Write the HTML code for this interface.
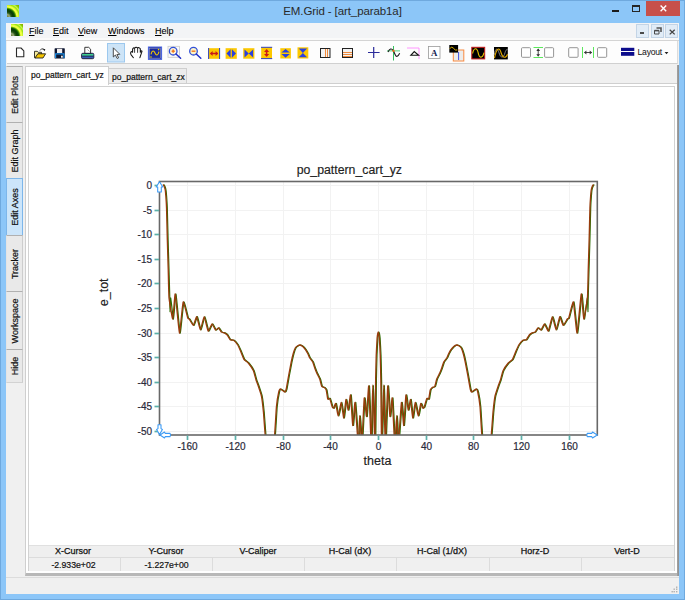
<!DOCTYPE html>
<html><head><meta charset="utf-8">
<style>
*{margin:0;padding:0;box-sizing:border-box}
html,body{width:685px;height:600px;overflow:hidden}
body{position:relative;background:#8cc6f8;font-family:"Liberation Sans",sans-serif;color:#000}
.a{position:absolute}
svg.a{overflow:visible}
#frame{left:0;top:0;width:685px;height:600px;border:1px solid #6fa9de}
#title{left:0;top:5px;width:685px;text-align:center;font-size:11.5px;color:#2a2a2a;letter-spacing:-0.1px}
#client{left:6px;top:23px;width:673px;height:571px;background:#f0f0f0}
#menubar{left:6px;top:23px;width:673px;height:18px;background:#f3f4f6;border-bottom:1px solid #d4d4d4;box-shadow:inset 0 -2px 0 #fafafa}
.menu{top:26px;font-size:9px;color:#000;-webkit-text-stroke:0.1px #000}
.menu u{text-decoration:underline}
#toolbar{left:7px;top:41px;width:671px;height:23px;background:#fdfdfd;border-top:none;border-bottom:1px solid #d0d0d0;border-right:1px solid #dcdcdc}
.vtab{left:6px;width:17px;background:#e9e9e9;border:1px solid #d2d2d2;border-left-color:#e4e4e4;border-right-color:#cdcdcd;border-top-color:#b0b0b0}
.vtab span{position:absolute;left:50%;top:50%;transform:translate(-50%,-50%) rotate(-90deg);font-size:9px;white-space:nowrap;color:#111;-webkit-text-stroke:0.2px #111}
#tabpage{left:25px;top:83px;width:654px;height:493px;background:#fff;border:1px solid #cfcfcf;border-bottom:3px solid #b8b8b8;border-right:2px solid #9c9c9c}
#content{left:28px;top:86px;width:647px;height:485px;background:#fff;border:1px solid #d2d2d2;border-bottom:none}
.tab{font-size:8.5px;color:#111;white-space:nowrap;-webkit-text-stroke:0.2px #111}
#stathdr{left:29px;top:545px;width:645px;height:12px;background:#efefef;border-top:1px solid #e0e0e0}
#statrow{left:29px;top:557px;width:645px;height:14px;background:#f0f0f0;border-top:1px solid #dcdcdc}
.sh{top:546px;font-size:9px;text-align:center;width:92px;color:#111;-webkit-text-stroke:0.25px #111}
.sd{top:560px;font-size:8.7px;text-align:center;width:92px;color:#111;-webkit-text-stroke:0.2px #111;padding-left:1px}
.vd{top:558px;width:1px;height:13px;background:#dcdcdc}
#strip{left:6px;top:577px;width:673px;height:17px;background:#f0f0f0;border-top:1px solid #dcdcdc}
</style></head><body>
<div class="a" id="frame"></div>
<!-- title icon -->
<div class="a" style="left:7px;top:5px;width:12px;height:12px;background:radial-gradient(circle 17px at 0 12px,#6a7a30 0px,#98a878 2.5px,#2a5a18 4.2px,#083c04 6px,#0e5004 7.6px,#50a000 8.6px,#f4ff48 9.8px,#e8ff40 11px,#98e010 12.5px,#c8f850 13.6px,#88c800 15px,#86a400 17px)"></div>
<div class="a" id="title">EM.Grid - [art_parab1a]</div>
<div class="a" style="left:612px;top:10px;width:6.5px;height:1.6px;background:#1a1a1a"></div>
<div class="a" style="left:632px;top:5px;width:8px;height:6.5px;border:1px solid #262626;border-top-width:2px"></div>
<div class="a" style="left:646px;top:1px;width:34px;height:15px;background:#c7504b"></div>
<svg class="a" style="left:660px;top:5px" width="7" height="7"><path d="M0.6,0.6 L6.2,6.2 M6.2,0.6 L0.6,6.2" stroke="#fff" stroke-width="1.4"/></svg>
<div class="a" id="client"></div>
<div class="a" id="menubar"></div>
<div class="a" style="left:11px;top:24px;width:12px;height:12px;background:radial-gradient(circle 17px at 0 12px,#6a7a30 0px,#98a878 2.5px,#2a5a18 4.2px,#083c04 6px,#0e5004 7.6px,#50a000 8.6px,#f4ff48 9.8px,#e8ff40 11px,#98e010 12.5px,#c8f850 13.6px,#88c800 15px,#86a400 17px)"></div>
<div class="a menu" style="left:29px"><u>F</u>ile</div>
<div class="a menu" style="left:53px"><u>E</u>dit</div>
<div class="a menu" style="left:78px"><u>V</u>iew</div>
<div class="a menu" style="left:108px"><u>W</u>indows</div>
<div class="a menu" style="left:155px"><u>H</u>elp</div>
<!-- mdi buttons -->
<div class="a" style="left:636px;top:24px;width:13px;height:14px;background:#e1ecf7;border:1px solid #c3d4e6"></div>
<div class="a" style="left:650.5px;top:24px;width:13px;height:14px;background:#e1ecf7;border:1px solid #c3d4e6"></div>
<div class="a" style="left:665px;top:24px;width:13px;height:14px;background:#e1ecf7;border:1px solid #c3d4e6"></div>
<div class="a" style="left:639.5px;top:32.3px;width:4.8px;height:1.8px;background:#4a4a4a"></div>
<svg class="a" style="left:653px;top:26px" width="10" height="10"><path d="M3.5,2 h4.5 v4" fill="none" stroke="#555" stroke-width="1.6"/><path d="M1.5,4.5 h4.5 v3.5 h-4.5 z" fill="#e1ecf7" stroke="#4a4a4a" stroke-width="1"/><path d="M1.5,4.6 h4.5" stroke="#4a4a4a" stroke-width="1.6"/></svg>
<svg class="a" style="left:668.5px;top:28.5px" width="7" height="7"><path d="M0.7,0.7 L5.7,5.4 M5.7,0.7 L0.7,5.4" stroke="#444" stroke-width="1.3"/></svg>
<div class="a" id="toolbar"></div>
<!--ICONS--><svg class="a" style="left:0;top:0" width="685" height="70" viewBox="0 0 685 70">
<!-- new doc -->
<path d="M16.5,48 H21 L23.8,50.8 V56.7 H16.5 Z" fill="#fff" stroke="#2a2a2a" stroke-width="1.1" stroke-linejoin="round"/>
<!-- open folder -->
<path d="M34.5,57.8 V51.3 H37.3 L38.2,52.3 H41.5 V54 H38 L35.5,57.8 Z" fill="#f7ec9a" stroke="#222" stroke-width="0.9"/>
<path d="M35,58 L37.8,53.8 H45.6 L43,58 Z" fill="#f4c400" stroke="#222" stroke-width="0.9" stroke-linejoin="round"/>
<path d="M40,50.5 Q41.5,47.6 43.8,49.3" fill="none" stroke="#222" stroke-width="0.9"/>
<path d="M43,48.8 L45.4,49.2 L44.4,51.2 Z" fill="#111"/>
<!-- save -->
<rect x="54.6" y="48.3" width="10.2" height="10.2" rx="0.6" fill="#0e1630"/>
<rect x="57" y="48.8" width="5.2" height="4.2" fill="#f2eeee"/>
<path d="M55.3,53.8 H64.3 M55.6,53.6 V58 M63.9,53.6 V58" stroke="#1d8fe6" stroke-width="1.2" fill="none"/>
<rect x="61" y="55.7" width="1.8" height="2" fill="#eee"/>
<!-- print -->
<path d="M84.8,47.3 H88.7 L90.6,49.2 V53.5 H84.8 Z" fill="#fff" stroke="#222" stroke-width="0.9"/>
<path d="M87.5,49.5 L89.5,51.5" stroke="#888" stroke-width="0.7"/>
<rect x="81.6" y="53.3" width="12.2" height="5.4" rx="1.2" fill="#3a5ab8" stroke="#1a1a30" stroke-width="0.9"/>
<rect x="82.2" y="54" width="11" height="1.7" fill="#3ed08a"/>
<line x1="82.2" y1="56.2" x2="93.2" y2="56.2" stroke="#1a2a40" stroke-width="0.8"/>
<!-- pointer button -->
<rect x="107.5" y="43.5" width="17" height="18.5" fill="#cde4f7" stroke="#9cc8ee" stroke-width="1"/>
<path d="M113.3,47.8 V57 L115.4,55 L117.2,58.5 L118.6,57.8 L116.9,54.5 L119.8,54.3 Z" fill="#fff" stroke="#3a3a3a" stroke-width="0.9" stroke-linejoin="round"/>
<!-- hand -->
<path d="M133.4,57.7 L131,54.6 Q130.1,53 131,51.9 Q131.9,51.3 132.6,52.3 V49.2 Q133.4,47.2 134.6,48.2 Q136,46.4 137.6,48 Q139,46.9 140.3,48.8 V52.3 L140.8,51.2 Q141.6,50.2 142,51.3 L139.9,57.7" fill="#fff" stroke="#111" stroke-width="1.05" stroke-linejoin="round" stroke-linecap="round"/>
<path d="M134.6,48.4 V52.4 M137.6,48.2 V52.4" stroke="#222" stroke-width="0.9" stroke-linecap="round"/>
<!-- graph icon -->
<rect x="148.4" y="47" width="13.2" height="12.4" fill="#1a2a9a" stroke="#4a64e0" stroke-width="1"/>
<rect x="149.6" y="48.2" width="10.8" height="10" fill="none" stroke="#9aa0c0" stroke-width="0.6"/>
<path d="M151,54.3 C152,50.2 153.8,50.2 155,53 S158,55.8 159,51.6" fill="none" stroke="#f0c800" stroke-width="1.1"/>
<circle cx="158.6" cy="49.6" r="0.8" fill="#f0d000"/>
<circle cx="151" cy="57" r="0.8" fill="#f0d000"/>
<!-- zoom in -->
<rect x="168" y="46.3" width="11.5" height="11" fill="#fafafa" stroke="#c8c8c8" stroke-width="0.8"/>
<circle cx="173.2" cy="51.2" r="3.8" fill="#fff4d8" stroke="#3050d8" stroke-width="1.3"/>
<path d="M171.6,51.2 H174.8 M173.2,49.6 V52.8" stroke="#f07a20" stroke-width="1.5"/>
<path d="M176,54 L180.6,58.3" stroke="#2030c8" stroke-width="1.5" stroke-linecap="round"/>
<!-- zoom out -->
<circle cx="193.5" cy="51.2" r="3.8" fill="#fdf4c8" stroke="#3050d8" stroke-width="1.3"/>
<path d="M191.6,51.2 H195.4" stroke="#f07a20" stroke-width="1.4"/>
<path d="M196.3,54 L200.8,58.3" stroke="#2030c8" stroke-width="1.5" stroke-linecap="round"/>
<!-- h expand -->
<rect x="208.3" y="48.2" width="11.6" height="10.6" fill="#fcc800"/>
<path d="M208.6,48 V59 M219.6,48 V59" stroke="#3040c0" stroke-width="1"/>
<path d="M210.5,53.5 H217.7" stroke="#c81818" stroke-width="1.5"/>
<path d="M210,53.5 L212.6,51 V56 Z M218.2,53.5 L215.6,51 V56 Z" fill="#c81818"/>
<!-- h contract -->
<rect x="225.6" y="48.2" width="11.2" height="10.6" fill="#fcc800"/>
<path d="M226.5,53.5 L230.6,49.3 V57.7 Z M236,53.5 L231.9,49.3 V57.7 Z" fill="#2a40e0"/>
<!-- bowtie -->
<rect x="243.2" y="48.2" width="11.2" height="10.5" fill="#fcc800"/>
<path d="M244.5,49.4 L248.8,53.5 L244.5,57.6 Z M253.1,49.4 L248.8,53.5 L253.1,57.6 Z" fill="#2a40e0"/>
<!-- v expand -->
<rect x="261.2" y="47.2" width="10.8" height="11.5" fill="#fcc800"/>
<path d="M261,47.3 H272.2 M261,58.6 H272.2" stroke="#3040c0" stroke-width="1"/>
<path d="M266.6,49.6 V56.3" stroke="#c81818" stroke-width="1.5"/>
<path d="M266.6,49.2 L264,52 H269.2 Z M266.6,56.8 L264,54 H269.2 Z" fill="#c81818"/>
<!-- v contract (up/down) -->
<rect x="280.3" y="48.2" width="10.6" height="10.3" fill="#fcc800"/>
<path d="M285.6,48.9 L281.4,52.6 H289.8 Z M285.6,57.8 L281.4,54.1 H289.8 Z" fill="#2a40e0"/>
<!-- hourglass -->
<rect x="297.5" y="47.3" width="10.8" height="11.2" fill="#fcc800"/>
<path d="M298.7,48.6 H307.1 L302.9,52.9 Z M298.7,57.2 H307.1 L302.9,52.9 Z" fill="#2a40e0"/>
<!-- column icon -->
<rect x="320.5" y="48.5" width="9.5" height="9" fill="#f2f2f2" stroke="#222" stroke-width="1"/>
<path d="M325.5,49 V57 M327.5,49 V57" stroke="#f08a3a" stroke-width="1"/>
<!-- row icon -->
<rect x="342.5" y="48.5" width="10" height="9" fill="#f2f2f2" stroke="#222" stroke-width="1"/>
<path d="M343,52.5 H352 M343,54.5 H352 M343,56.5 H352" stroke="#f08a3a" stroke-width="1"/>
<!-- crosshair -->
<path d="M368,52.5 H379.6 M373.7,47 V58" stroke="#2a2a9a" stroke-width="1.2"/>
<!-- cursor wave -->
<path d="M387,50.8 H400" stroke="#8ce0a8" stroke-width="1.5"/>
<path d="M393.5,46 V60.5" stroke="#34c060" stroke-width="1"/>
<path d="M388,52 Q390.6,46.8 393.3,50.6 L395.2,54.8 Q396.9,58.6 399.7,53.2" fill="none" stroke="#1a1a1a" stroke-width="1.1"/>
<rect x="392.5" y="49.8" width="2" height="2" fill="#f86a10"/>
<!-- triangle -->
<path d="M407,48 H419 V59" fill="none" stroke="#ff8aff" stroke-width="0.9"/>
<path d="M414.2,51.6 L410.8,55.3 H418.6 Z" fill="none" stroke="#111" stroke-width="1.1" stroke-linejoin="miter"/>
<!-- A text -->
<rect x="428.5" y="46.5" width="11.5" height="12" fill="#fff" stroke="#9a9a9a" stroke-width="0.8"/>
<text x="434.2" y="56.2" text-anchor="middle" font-family="Liberation Serif" font-weight="bold" font-size="8.8" fill="#102050">A</text>
<!-- wave + orange box -->
<rect x="453.3" y="50" width="10.5" height="11" fill="#ececec" stroke="#f88a40" stroke-width="1"/>
<path d="M458.6,52 V60" stroke="#4050e0" stroke-width="1"/>
<rect x="449.3" y="45" width="8.8" height="7.6" fill="#000"/>
<path d="M449.8,48.8 Q451.5,45.5 453.4,48.2 T457.3,50" fill="none" stroke="#e8b800" stroke-width="1"/>
<!-- red wave box -->
<rect x="471.8" y="47.3" width="12.9" height="11.6" fill="#000" stroke="#c81a1a" stroke-width="1"/>
<path d="M472.6,53.5 C473.8,47.2 477,47.2 478.2,52.8 C479.4,58.6 482.6,58.6 484,52.6" fill="none" stroke="#e8c000" stroke-width="1.1"/>
<!-- black wave box -->
<rect x="494" y="47" width="13.8" height="12.4" fill="#000"/>
<path d="M494.3,55 C495,48 497.5,47.5 499,52.8 C500.5,58.5 503.5,58.5 505,52.8 C505.6,50.5 506.2,49.5 507.5,49.5" fill="none" stroke="#8a8a8a" stroke-width="0.9"/>
<path d="M494.5,58.2 C496.5,47 499.5,47 501.2,53 C502.8,58.5 506,58.5 507.5,54.2" fill="none" stroke="#e0a800" stroke-width="1.1"/>
<!-- checkboxes -->
<g fill="#fff" stroke="#8a8a8a" stroke-width="0.9">
<rect x="521.5" y="47.7" width="9" height="9.6" rx="1"/>
<rect x="544.6" y="47.7" width="9" height="9.6" rx="1"/>
<rect x="568.7" y="47.7" width="9.4" height="9.6" rx="1"/>
<rect x="597.5" y="47.7" width="9.2" height="9.6" rx="1"/>
</g>
<path d="M533.5,47.5 H543 M533.5,57.5 H543" stroke="#5ce85c" stroke-width="1"/>
<path d="M538.2,49 V56.2" stroke="#333" stroke-width="0.9"/>
<path d="M538.2,48.6 L536.3,51 H540.1 Z M538.2,56.6 L536.3,54.2 H540.1 Z" fill="#333"/>
<path d="M582.5,47 V58 M593.5,47 V58" stroke="#5ce85c" stroke-width="1"/>
<path d="M584.5,52.5 H591.6" stroke="#333" stroke-width="0.9"/>
<path d="M584,52.5 L586.4,50.6 V54.4 Z M592.1,52.5 L589.7,50.6 V54.4 Z" fill="#333"/>
<!-- layout -->
<rect x="621" y="47.8" width="13.3" height="3.2" fill="#0c0c8c"/>
<rect x="621" y="52" width="13.3" height="3.8" fill="#0c0c8c"/>
<text x="637.6" y="55.3" font-family="Liberation Sans" font-size="8.6" fill="#111" letter-spacing="-0.25">Layout</text>
<path d="M664.6,52 H668.4 L666.5,54.2 Z" fill="#222"/>
</svg>
<!--/ICONS-->
<!-- vertical tabs -->
<div class="a vtab" style="top:66px;height:57px"><span>Edit Plots</span></div>
<div class="a vtab" style="top:122px;height:57px"><span>Edit Graph</span></div>
<div class="a vtab" style="top:178px;height:58px;background:#cce5fa;border-color:#7db6ea"><span>Edit Axes</span></div>
<div class="a vtab" style="top:235px;height:57px"><span>Tracker</span></div>
<div class="a vtab" style="top:291px;height:59px"><span>Workspace</span></div>
<div class="a vtab" style="top:349px;height:34px"><span>Hide</span></div>
<!-- tab control -->
<div class="a" id="tabpage"></div>
<div class="a" style="left:108px;top:68px;width:79px;height:15px;background:#ececec;border:1px solid #cfcfcf;border-bottom:none"></div>
<div class="a" style="left:25px;top:66px;width:84px;height:19px;background:#fff;border:1px solid #cfcfcf;border-bottom:none"></div>
<div class="a tab" style="left:31px;top:70px">po_pattern_cart_yz</div>
<div class="a tab" style="left:112px;top:72px">po_pattern_cart_zx</div>
<div class="a" id="content"></div>
<div class="a" style="left:677px;top:65px;width:2px;height:511px;background:linear-gradient(90deg,#a4a4a4,#8e8e8e)"></div>
<svg class="a" style="left:0;top:0" width="685" height="600" viewBox="0 0 685 600">
<defs><clipPath id="pc"><rect x="159.5" y="181.5" width="437.79999999999995" height="253.5"/></clipPath></defs>
<g stroke="#f2f2f2" stroke-width="1"><line x1="187.5" y1="181.5" x2="187.5" y2="435.0"/><line x1="235.5" y1="181.5" x2="235.5" y2="435.0"/><line x1="283.5" y1="181.5" x2="283.5" y2="435.0"/><line x1="330.5" y1="181.5" x2="330.5" y2="435.0"/><line x1="378.5" y1="181.5" x2="378.5" y2="435.0"/><line x1="426.5" y1="181.5" x2="426.5" y2="435.0"/><line x1="473.5" y1="181.5" x2="473.5" y2="435.0"/><line x1="521.5" y1="181.5" x2="521.5" y2="435.0"/><line x1="569.5" y1="181.5" x2="569.5" y2="435.0"/><line x1="159.5" y1="185.5" x2="597.3" y2="185.5"/><line x1="159.5" y1="210.5" x2="597.3" y2="210.5"/><line x1="159.5" y1="234.5" x2="597.3" y2="234.5"/><line x1="159.5" y1="259.5" x2="597.3" y2="259.5"/><line x1="159.5" y1="283.5" x2="597.3" y2="283.5"/><line x1="159.5" y1="308.5" x2="597.3" y2="308.5"/><line x1="159.5" y1="333.5" x2="597.3" y2="333.5"/><line x1="159.5" y1="357.5" x2="597.3" y2="357.5"/><line x1="159.5" y1="382.5" x2="597.3" y2="382.5"/><line x1="159.5" y1="406.5" x2="597.3" y2="406.5"/><line x1="159.5" y1="431.5" x2="597.3" y2="431.5"/></g>
<g clip-path="url(#pc)" fill="none" stroke-linejoin="round">
<path d="M163.80,184.50 C163.88,184.63 164.85,186.13 165.00,186.50 C165.15,186.87 165.89,189.37 166.00,190.00 C166.11,190.63 166.51,194.80 166.60,196.00 C166.69,197.20 167.20,205.07 167.30,208.00 C167.40,210.93 167.99,235.87 168.10,240.00 C168.21,244.13 168.89,266.13 169.00,270.00 C169.11,273.87 169.73,295.20 169.80,298.00 C169.87,300.80 169.94,312.00 170.00,312.00 C170.06,312.00 170.47,297.53 170.70,298.00 C170.93,298.47 173.15,319.27 173.50,319.00 C173.85,318.73 175.55,293.07 176.00,294.00 C176.45,294.93 179.67,332.47 180.20,333.00 C180.73,333.53 183.35,303.00 183.90,302.00 C184.45,301.00 188.09,316.87 188.50,318.00 C188.91,319.13 189.63,318.51 190.00,319.00 C190.37,319.49 193.60,325.55 194.10,325.40 C194.60,325.25 197.03,316.39 197.50,316.70 C197.97,317.01 200.61,330.00 201.10,330.00 C201.59,330.00 204.38,316.63 204.90,316.70 C205.42,316.77 208.37,330.52 208.90,331.00 C209.43,331.48 212.31,323.96 212.80,323.90 C213.29,323.84 215.87,329.84 216.30,330.10 C216.73,330.36 218.91,327.67 219.30,327.80 C219.69,327.93 221.81,331.76 222.20,332.10 C222.59,332.44 224.71,332.71 225.10,332.90 C225.49,333.09 227.61,334.55 228.00,335.00 C228.39,335.45 230.47,339.35 230.90,339.70 C231.33,340.05 233.89,339.95 234.40,340.30 C234.91,340.65 238.03,344.27 238.50,345.00 C238.97,345.73 240.97,350.32 241.40,351.30 C241.83,352.28 244.39,358.92 244.90,359.70 C245.41,360.48 248.38,362.27 249.00,363.00 C249.62,363.73 253.68,369.57 254.20,370.70 C254.72,371.83 256.49,379.03 256.80,380.00 C257.11,380.97 258.44,384.23 258.80,385.30 C259.16,386.37 261.84,394.22 262.20,396.00 C262.56,397.78 263.88,408.73 264.20,412.00 C264.52,415.27 266.31,442.80 267.00,445.00 C267.69,447.20 273.82,447.55 274.50,445.00 C275.18,442.45 276.87,410.23 277.20,406.70 C277.53,403.17 279.23,393.18 279.50,392.00 C279.77,390.82 280.80,389.00 281.20,389.00 C281.60,389.00 285.11,392.00 285.50,392.00 C285.89,392.00 286.73,390.13 287.00,389.00 C287.27,387.87 289.17,376.80 289.50,375.00 C289.83,373.20 291.70,363.43 292.00,362.00 C292.30,360.57 293.73,354.43 294.00,353.50 C294.27,352.57 295.70,348.51 296.00,348.00 C296.30,347.49 298.19,346.00 298.50,345.80 C298.81,345.60 300.37,344.95 300.70,345.00 C301.03,345.05 303.11,346.17 303.50,346.50 C303.89,346.83 306.17,349.53 306.50,350.00 C306.83,350.47 308.23,352.97 308.50,353.50 C308.77,354.03 310.17,357.43 310.50,358.00 C310.83,358.57 313.17,361.33 313.50,362.00 C313.83,362.67 315.23,367.27 315.50,368.00 C315.77,368.73 317.17,372.27 317.50,373.00 C317.83,373.73 320.17,378.10 320.50,379.00 C320.83,379.90 322.20,385.93 322.50,386.50 C322.80,387.07 324.70,387.27 325.00,387.50 C325.30,387.73 326.77,389.23 327.00,390.00 C327.23,390.77 328.27,398.43 328.50,399.00 C328.73,399.57 330.20,397.97 330.50,398.50 C330.80,399.03 332.73,406.37 333.00,407.00 C333.27,407.63 334.27,408.23 334.50,408.00 C334.73,407.77 336.20,402.97 336.50,403.50 C336.80,404.03 338.63,416.07 339.00,416.00 C339.37,415.93 341.63,402.37 342.00,402.50 C342.37,402.63 344.19,418.20 344.50,418.00 C344.81,417.80 346.40,400.03 346.70,399.50 C347.00,398.97 348.69,410.30 349.00,410.00 C349.31,409.70 351.00,393.97 351.30,395.00 C351.60,396.03 353.20,425.00 353.50,425.50 C353.80,426.00 355.43,401.20 355.80,402.50 C356.17,403.80 358.69,444.13 359.00,445.00 C359.31,445.87 360.27,415.50 360.50,415.50 C360.73,415.50 362.20,446.17 362.50,445.00 C362.80,443.83 364.68,399.90 365.00,398.00 C365.32,396.10 367.00,417.30 367.30,416.50 C367.60,415.70 369.19,384.10 369.50,386.00 C369.81,387.90 371.73,445.07 372.00,445.00 C372.27,444.93 373.25,385.00 373.50,385.00 C373.75,385.00 375.51,445.33 375.70,445.00 C375.89,444.67 376.31,386.00 376.40,380.00 C376.49,374.00 376.90,357.80 377.00,355.00 C377.10,352.20 377.77,339.53 377.90,338.00 C378.03,336.47 378.85,332.00 379.00,332.00 C379.15,332.00 379.97,336.47 380.10,338.00 C380.23,339.53 380.90,352.20 381.00,355.00 C381.10,357.80 381.51,374.00 381.60,380.00 C381.69,386.00 382.11,444.67 382.30,445.00 C382.49,445.33 384.25,385.00 384.50,385.00 C384.75,385.00 385.73,444.93 386.00,445.00 C386.27,445.07 388.19,387.90 388.50,386.00 C388.81,384.10 390.40,415.70 390.70,416.50 C391.00,417.30 392.68,396.10 393.00,398.00 C393.32,399.90 395.20,443.83 395.50,445.00 C395.80,446.17 397.27,415.50 397.50,415.50 C397.73,415.50 398.69,445.87 399.00,445.00 C399.31,444.13 401.83,403.80 402.20,402.50 C402.57,401.20 404.20,426.00 404.50,425.50 C404.80,425.00 406.40,396.03 406.70,395.00 C407.00,393.97 408.69,409.70 409.00,410.00 C409.31,410.30 411.00,398.97 411.30,399.50 C411.60,400.03 413.19,417.80 413.50,418.00 C413.81,418.20 415.63,402.63 416.00,402.50 C416.37,402.37 418.63,415.93 419.00,416.00 C419.37,416.07 421.20,404.03 421.50,403.50 C421.80,402.97 423.27,407.77 423.50,408.00 C423.73,408.23 424.73,407.63 425.00,407.00 C425.27,406.37 427.20,399.03 427.50,398.50 C427.80,397.97 429.27,399.57 429.50,399.00 C429.73,398.43 430.77,390.77 431.00,390.00 C431.23,389.23 432.70,387.73 433.00,387.50 C433.30,387.27 435.20,387.07 435.50,386.50 C435.80,385.93 437.17,379.90 437.50,379.00 C437.83,378.10 440.17,373.73 440.50,373.00 C440.83,372.27 442.23,368.73 442.50,368.00 C442.77,367.27 444.17,362.67 444.50,362.00 C444.83,361.33 447.17,358.57 447.50,358.00 C447.83,357.43 449.23,354.03 449.50,353.50 C449.77,352.97 451.17,350.47 451.50,350.00 C451.83,349.53 454.11,346.83 454.50,346.50 C454.89,346.17 456.97,345.05 457.30,345.00 C457.63,344.95 459.19,345.60 459.50,345.80 C459.81,346.00 461.70,347.49 462.00,348.00 C462.30,348.51 463.73,352.57 464.00,353.50 C464.27,354.43 465.70,360.57 466.00,362.00 C466.30,363.43 468.17,373.20 468.50,375.00 C468.83,376.80 470.73,387.87 471.00,389.00 C471.27,390.13 472.11,392.00 472.50,392.00 C472.89,392.00 476.40,389.00 476.80,389.00 C477.20,389.00 478.23,390.82 478.50,392.00 C478.77,393.18 480.47,403.17 480.80,406.70 C481.13,410.23 482.82,442.45 483.50,445.00 C484.18,447.55 490.31,447.20 491.00,445.00 C491.69,442.80 493.48,415.27 493.80,412.00 C494.12,408.73 495.44,397.78 495.80,396.00 C496.16,394.22 498.84,386.37 499.20,385.30 C499.56,384.23 500.89,380.97 501.20,380.00 C501.51,379.03 503.28,371.83 503.80,370.70 C504.32,369.57 508.38,363.73 509.00,363.00 C509.62,362.27 512.59,360.48 513.10,359.70 C513.61,358.92 516.17,352.28 516.60,351.30 C517.03,350.32 519.03,345.73 519.50,345.00 C519.97,344.27 523.09,340.65 523.60,340.30 C524.11,339.95 526.67,340.05 527.10,339.70 C527.53,339.35 529.61,335.45 530.00,335.00 C530.39,334.55 532.51,333.09 532.90,332.90 C533.29,332.71 535.41,332.44 535.80,332.10 C536.19,331.76 538.31,327.93 538.70,327.80 C539.09,327.67 541.27,330.36 541.70,330.10 C542.13,329.84 544.71,323.84 545.20,323.90 C545.69,323.96 548.57,331.48 549.10,331.00 C549.63,330.52 552.58,316.77 553.10,316.70 C553.62,316.63 556.41,330.00 556.90,330.00 C557.39,330.00 560.03,317.01 560.50,316.70 C560.97,316.39 563.40,325.25 563.90,325.40 C564.40,325.55 567.63,319.49 568.00,319.00 C568.37,318.51 569.09,319.13 569.50,318.00 C569.91,316.87 573.55,301.00 574.10,302.00 C574.65,303.00 577.27,333.53 577.80,333.00 C578.33,332.47 581.55,294.93 582.00,294.00 C582.45,293.07 584.15,318.73 584.50,319.00 C584.85,319.27 587.07,298.47 587.30,298.00 C587.53,297.53 587.94,312.00 588.00,312.00 C588.06,312.00 588.13,300.80 588.20,298.00 C588.27,295.20 588.89,273.87 589.00,270.00 C589.11,266.13 589.79,244.13 589.90,240.00 C590.01,235.87 590.60,210.93 590.70,208.00 C590.80,205.07 591.31,197.20 591.40,196.00 C591.49,194.80 591.89,190.63 592.00,190.00 C592.11,189.37 592.85,186.87 593.00,186.50 C593.15,186.13 594.12,184.63 594.20,184.50" stroke="#2c6c00" stroke-width="1.2"/>
<path d="M163.05,184.50 C163.13,184.63 164.10,186.13 164.25,186.50 C164.40,186.87 165.14,189.37 165.25,190.00 C165.36,190.63 165.76,194.80 165.85,196.00 C165.94,197.20 166.45,205.07 166.55,208.00 C166.65,210.93 167.24,235.87 167.35,240.00 C167.46,244.13 168.14,266.13 168.25,270.00 C168.36,273.87 168.75,294.73 169.05,298.00 C169.35,301.27 172.34,319.27 172.75,319.00 C173.16,318.73 174.80,293.07 175.25,294.00 C175.70,294.93 178.92,332.47 179.45,333.00 C179.98,333.53 182.60,303.00 183.15,302.00 C183.70,301.00 187.34,316.87 187.75,318.00 C188.16,319.13 188.88,318.51 189.25,319.00 C189.62,319.49 192.85,325.55 193.35,325.40 C193.85,325.25 196.28,316.39 196.75,316.70 C197.22,317.01 199.86,330.00 200.35,330.00 C200.84,330.00 203.63,316.63 204.15,316.70 C204.67,316.77 207.62,330.52 208.15,331.00 C208.68,331.48 211.56,323.96 212.05,323.90 C212.54,323.84 215.12,329.84 215.55,330.10 C215.98,330.36 218.16,327.67 218.55,327.80 C218.94,327.93 221.06,331.76 221.45,332.10 C221.84,332.44 223.96,332.71 224.35,332.90 C224.74,333.09 226.86,334.55 227.25,335.00 C227.64,335.45 229.72,339.35 230.15,339.70 C230.58,340.05 233.14,339.95 233.65,340.30 C234.16,340.65 237.28,344.27 237.75,345.00 C238.22,345.73 240.22,350.32 240.65,351.30 C241.08,352.28 243.64,358.92 244.15,359.70 C244.66,360.48 247.63,362.27 248.25,363.00 C248.87,363.73 252.93,369.57 253.45,370.70 C253.97,371.83 255.74,379.03 256.05,380.00 C256.36,380.97 257.69,384.23 258.05,385.30 C258.41,386.37 261.09,394.22 261.45,396.00 C261.81,397.78 263.13,408.73 263.45,412.00 C263.77,415.27 265.56,442.80 266.25,445.00 C266.94,447.20 273.07,447.55 273.75,445.00 C274.43,442.45 276.12,410.23 276.45,406.70 C276.78,403.17 278.48,393.18 278.75,392.00 C279.02,390.82 280.05,389.00 280.45,389.00 C280.85,389.00 284.36,392.00 284.75,392.00 C285.14,392.00 285.98,390.13 286.25,389.00 C286.52,387.87 288.42,376.80 288.75,375.00 C289.08,373.20 290.95,363.43 291.25,362.00 C291.55,360.57 292.98,354.43 293.25,353.50 C293.52,352.57 294.95,348.51 295.25,348.00 C295.55,347.49 297.44,346.00 297.75,345.80 C298.06,345.60 299.62,344.95 299.95,345.00 C300.28,345.05 302.36,346.17 302.75,346.50 C303.14,346.83 305.42,349.53 305.75,350.00 C306.08,350.47 307.48,352.97 307.75,353.50 C308.02,354.03 309.42,357.43 309.75,358.00 C310.08,358.57 312.42,361.33 312.75,362.00 C313.08,362.67 314.48,367.27 314.75,368.00 C315.02,368.73 316.42,372.27 316.75,373.00 C317.08,373.73 319.42,378.10 319.75,379.00 C320.08,379.90 321.45,385.93 321.75,386.50 C322.05,387.07 323.95,387.27 324.25,387.50 C324.55,387.73 326.02,389.23 326.25,390.00 C326.48,390.77 327.52,398.43 327.75,399.00 C327.98,399.57 329.45,397.97 329.75,398.50 C330.05,399.03 331.98,406.37 332.25,407.00 C332.52,407.63 333.52,408.23 333.75,408.00 C333.98,407.77 335.45,402.97 335.75,403.50 C336.05,404.03 337.88,416.07 338.25,416.00 C338.62,415.93 340.88,402.37 341.25,402.50 C341.62,402.63 343.44,418.20 343.75,418.00 C344.06,417.80 345.65,400.03 345.95,399.50 C346.25,398.97 347.94,410.30 348.25,410.00 C348.56,409.70 350.25,393.97 350.55,395.00 C350.85,396.03 352.45,425.00 352.75,425.50 C353.05,426.00 354.68,401.20 355.05,402.50 C355.42,403.80 357.94,444.13 358.25,445.00 C358.56,445.87 359.52,415.50 359.75,415.50 C359.98,415.50 361.45,446.17 361.75,445.00 C362.05,443.83 363.93,399.90 364.25,398.00 C364.57,396.10 366.25,417.30 366.55,416.50 C366.85,415.70 368.44,384.10 368.75,386.00 C369.06,387.90 370.98,445.07 371.25,445.00 C371.52,444.93 372.50,385.00 372.75,385.00 C373.00,385.00 374.76,445.33 374.95,445.00 C375.14,444.67 375.56,386.00 375.65,380.00 C375.74,374.00 376.15,357.80 376.25,355.00 C376.35,352.20 377.02,339.53 377.15,338.00 C377.28,336.47 378.10,332.00 378.25,332.00 C378.40,332.00 379.22,336.47 379.35,338.00 C379.48,339.53 380.15,352.20 380.25,355.00 C380.35,357.80 380.76,374.00 380.85,380.00 C380.94,386.00 381.36,444.67 381.55,445.00 C381.74,445.33 383.50,385.00 383.75,385.00 C384.00,385.00 384.98,444.93 385.25,445.00 C385.52,445.07 387.44,387.90 387.75,386.00 C388.06,384.10 389.65,415.70 389.95,416.50 C390.25,417.30 391.93,396.10 392.25,398.00 C392.57,399.90 394.45,443.83 394.75,445.00 C395.05,446.17 396.52,415.50 396.75,415.50 C396.98,415.50 397.94,445.87 398.25,445.00 C398.56,444.13 401.08,403.80 401.45,402.50 C401.82,401.20 403.45,426.00 403.75,425.50 C404.05,425.00 405.65,396.03 405.95,395.00 C406.25,393.97 407.94,409.70 408.25,410.00 C408.56,410.30 410.25,398.97 410.55,399.50 C410.85,400.03 412.44,417.80 412.75,418.00 C413.06,418.20 414.88,402.63 415.25,402.50 C415.62,402.37 417.88,415.93 418.25,416.00 C418.62,416.07 420.45,404.03 420.75,403.50 C421.05,402.97 422.52,407.77 422.75,408.00 C422.98,408.23 423.98,407.63 424.25,407.00 C424.52,406.37 426.45,399.03 426.75,398.50 C427.05,397.97 428.52,399.57 428.75,399.00 C428.98,398.43 430.02,390.77 430.25,390.00 C430.48,389.23 431.95,387.73 432.25,387.50 C432.55,387.27 434.45,387.07 434.75,386.50 C435.05,385.93 436.42,379.90 436.75,379.00 C437.08,378.10 439.42,373.73 439.75,373.00 C440.08,372.27 441.48,368.73 441.75,368.00 C442.02,367.27 443.42,362.67 443.75,362.00 C444.08,361.33 446.42,358.57 446.75,358.00 C447.08,357.43 448.48,354.03 448.75,353.50 C449.02,352.97 450.42,350.47 450.75,350.00 C451.08,349.53 453.36,346.83 453.75,346.50 C454.14,346.17 456.22,345.05 456.55,345.00 C456.88,344.95 458.44,345.60 458.75,345.80 C459.06,346.00 460.95,347.49 461.25,348.00 C461.55,348.51 462.98,352.57 463.25,353.50 C463.52,354.43 464.95,360.57 465.25,362.00 C465.55,363.43 467.42,373.20 467.75,375.00 C468.08,376.80 469.98,387.87 470.25,389.00 C470.52,390.13 471.36,392.00 471.75,392.00 C472.14,392.00 475.65,389.00 476.05,389.00 C476.45,389.00 477.48,390.82 477.75,392.00 C478.02,393.18 479.72,403.17 480.05,406.70 C480.38,410.23 482.07,442.45 482.75,445.00 C483.43,447.55 489.56,447.20 490.25,445.00 C490.94,442.80 492.73,415.27 493.05,412.00 C493.37,408.73 494.69,397.78 495.05,396.00 C495.41,394.22 498.09,386.37 498.45,385.30 C498.81,384.23 500.14,380.97 500.45,380.00 C500.76,379.03 502.53,371.83 503.05,370.70 C503.57,369.57 507.63,363.73 508.25,363.00 C508.87,362.27 511.84,360.48 512.35,359.70 C512.86,358.92 515.42,352.28 515.85,351.30 C516.28,350.32 518.28,345.73 518.75,345.00 C519.22,344.27 522.34,340.65 522.85,340.30 C523.36,339.95 525.92,340.05 526.35,339.70 C526.78,339.35 528.86,335.45 529.25,335.00 C529.64,334.55 531.76,333.09 532.15,332.90 C532.54,332.71 534.66,332.44 535.05,332.10 C535.44,331.76 537.56,327.93 537.95,327.80 C538.34,327.67 540.52,330.36 540.95,330.10 C541.38,329.84 543.96,323.84 544.45,323.90 C544.94,323.96 547.82,331.48 548.35,331.00 C548.88,330.52 551.83,316.77 552.35,316.70 C552.87,316.63 555.66,330.00 556.15,330.00 C556.64,330.00 559.28,317.01 559.75,316.70 C560.22,316.39 562.65,325.25 563.15,325.40 C563.65,325.55 566.88,319.49 567.25,319.00 C567.62,318.51 568.34,319.13 568.75,318.00 C569.16,316.87 572.80,301.00 573.35,302.00 C573.90,303.00 576.52,333.53 577.05,333.00 C577.58,332.47 580.80,294.93 581.25,294.00 C581.70,293.07 583.34,318.73 583.75,319.00 C584.16,319.27 587.15,301.27 587.45,298.00 C587.75,294.73 588.14,273.87 588.25,270.00 C588.36,266.13 589.04,244.13 589.15,240.00 C589.26,235.87 589.85,210.93 589.95,208.00 C590.05,205.07 590.56,197.20 590.65,196.00 C590.74,194.80 591.14,190.63 591.25,190.00 C591.36,189.37 592.10,186.87 592.25,186.50 C592.40,186.13 593.37,184.63 593.45,184.50" stroke="#973c0c" stroke-width="1.35"/>
</g>
<rect x="159.5" y="181.5" width="437.79999999999995" height="253.5" fill="none" stroke="#686868" stroke-width="1.6"/>
<g stroke="#5cb0aa" stroke-width="1.7"><line x1="187.5" y1="435.5" x2="187.5" y2="440"/><line x1="235.5" y1="435.5" x2="235.5" y2="440"/><line x1="283.5" y1="435.5" x2="283.5" y2="440"/><line x1="330.5" y1="435.5" x2="330.5" y2="440"/><line x1="378.5" y1="435.5" x2="378.5" y2="440"/><line x1="426.5" y1="435.5" x2="426.5" y2="440"/><line x1="473.5" y1="435.5" x2="473.5" y2="440"/><line x1="521.5" y1="435.5" x2="521.5" y2="440"/><line x1="569.5" y1="435.5" x2="569.5" y2="440"/><line x1="154.5" y1="185.5" x2="159" y2="185.5"/><line x1="154.5" y1="210.5" x2="159" y2="210.5"/><line x1="154.5" y1="234.5" x2="159" y2="234.5"/><line x1="154.5" y1="259.5" x2="159" y2="259.5"/><line x1="154.5" y1="283.5" x2="159" y2="283.5"/><line x1="154.5" y1="308.5" x2="159" y2="308.5"/><line x1="154.5" y1="333.5" x2="159" y2="333.5"/><line x1="154.5" y1="357.5" x2="159" y2="357.5"/><line x1="154.5" y1="382.5" x2="159" y2="382.5"/><line x1="154.5" y1="406.5" x2="159" y2="406.5"/><line x1="154.5" y1="431.5" x2="159" y2="431.5"/></g>
<g font-family="Liberation Sans" font-size="10" fill="#2a2a3a" stroke="#2a2a3a" stroke-width="0.2"><text x="187.5" y="450.3" text-anchor="middle">-160</text><text x="235.5" y="450.3" text-anchor="middle">-120</text><text x="283.5" y="450.3" text-anchor="middle">-80</text><text x="330.5" y="450.3" text-anchor="middle">-40</text><text x="378.5" y="450.3" text-anchor="middle">0</text><text x="426.5" y="450.3" text-anchor="middle">40</text><text x="473.5" y="450.3" text-anchor="middle">80</text><text x="521.5" y="450.3" text-anchor="middle">120</text><text x="569.5" y="450.3" text-anchor="middle">160</text><text x="152" y="189.1" text-anchor="end">0</text><text x="152" y="214.1" text-anchor="end">-5</text><text x="152" y="238.1" text-anchor="end">-10</text><text x="152" y="263.1" text-anchor="end">-15</text><text x="152" y="287.1" text-anchor="end">-20</text><text x="152" y="312.1" text-anchor="end">-25</text><text x="152" y="337.1" text-anchor="end">-30</text><text x="152" y="361.1" text-anchor="end">-35</text><text x="152" y="386.1" text-anchor="end">-40</text><text x="152" y="410.1" text-anchor="end">-45</text><text x="152" y="435.1" text-anchor="end">-50</text></g>
<text x="349.3" y="173.8" text-anchor="middle" font-family="Liberation Sans" font-size="12.3" fill="#222" stroke="#222" stroke-width="0.15">po_pattern_cart_yz</text>
<text x="377.5" y="464.8" text-anchor="middle" font-family="Liberation Sans" font-size="12.5" fill="#222" stroke="#222" stroke-width="0.15">theta</text>
<text transform="translate(107.8,292.3) rotate(-90)" text-anchor="middle" font-family="Liberation Sans" font-size="12.5" fill="#222" stroke="#222" stroke-width="0.15">e_tot</text>
<!-- cursor markers -->
<g fill="#fff" stroke="#3d9bf5" stroke-width="1.1" stroke-linejoin="round">
<path d="M159.5,181.8 L162.8,187 L161.3,187 L161.3,192 L157.7,192 L157.7,187 L156.2,187 Z"/>
<path d="M159.5,434.5 L156.6,429.5 L158,428.6 L158,424.8 L161,424.8 L161,428.6 L162.4,429.5 Z"/>
<path d="M160,435 L164.5,432 L165.3,433.4 L170,433.4 Q171.2,435 170,436.6 L165.3,436.6 L164.5,438 Z"/>
<path d="M597.3,435 L592.5,432 L591.7,433.4 L587.3,433.4 Q586.2,435 587.3,436.6 L591.7,436.6 L592.5,438 Z"/>
</g>
</svg>
<!-- status grid -->
<div class="a" id="stathdr"></div>
<div class="a" id="statrow"></div>
<div class="a sh" style="left:27px;font-weight:normal">X-Cursor</div>
<div class="a sh" style="left:120px">Y-Cursor</div>
<div class="a sh" style="left:212px">V-Caliper</div>
<div class="a sh" style="left:304px">H-Cal (dX)</div>
<div class="a sh" style="left:396px">H-Cal (1/dX)</div>
<div class="a sh" style="left:489px">Horz-D</div>
<div class="a sh" style="left:581px">Vert-D</div>
<div class="a sd" style="left:27px">-2.933e+02</div>
<div class="a sd" style="left:120px">-1.227e+00</div>
<div class="a vd" style="left:120px"></div>
<div class="a vd" style="left:212px"></div>
<div class="a vd" style="left:304px"></div>
<div class="a vd" style="left:396px"></div>
<div class="a vd" style="left:489px"></div>
<div class="a vd" style="left:581px"></div>
<div class="a" id="strip"></div>
<svg class="a" style="left:0;top:0" width="685" height="600"><g fill="#b0b0b0"><rect x="676" y="586.5" width="1.4" height="1.4"/><rect x="673.5" y="588.5" width="1.4" height="1.4"/><rect x="676" y="588.5" width="1.4" height="1.4"/><rect x="671.5" y="591" width="1.4" height="1.4"/><rect x="673.5" y="591" width="1.4" height="1.4"/><rect x="676" y="591" width="1.4" height="1.4"/></g></svg>
</body></html>
